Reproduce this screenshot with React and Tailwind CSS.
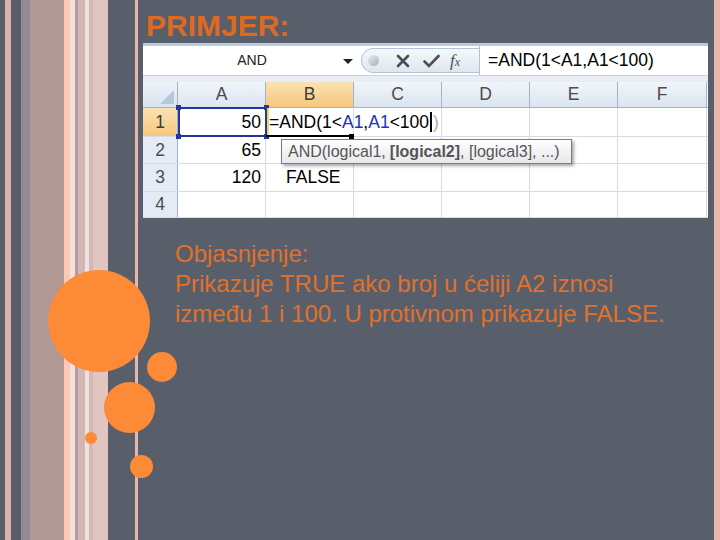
import React from 'react';

const stripes = [
  'w-[5px] bg-[#585f6b]',
  'w-[6px] bg-[#d8b1a8]',
  'w-[10px] bg-[#585f6b]',
  'w-[9px] bg-[#958a91]',
  'w-[34px] bg-[#b09894]',
  'w-[6px] bg-[#fbc9b6]',
  'w-[5px] bg-[#f3e1dc]',
  'w-[3px] bg-[#b89ba0]',
  'w-[7px] bg-[#d1b8b4]',
  'w-[4px] bg-[#f2e2df]',
  'w-[4px] bg-[#d4b8b8]',
  'w-[15px] bg-[#e0c5c1]',
  'w-[27px] bg-[#585f6b]',
  'w-[3px] bg-[#e8b6ab]',
];

const colWidths = ['w-[88px]', 'w-[88px]', 'w-[88px]', 'w-[88px]', 'w-[88px]', 'w-[89px]'];
const cols = ['A', 'B', 'C', 'D', 'E', 'F'];
const rowHeights = ['h-[29px]', 'h-[27px]', 'h-[28px]', 'h-[26px]'];

const FormulaText = () => (
  <>
    =AND(1&lt;<span className="text-[#2233b8]">A1</span>,<span className="text-[#2233b8]">A1</span>&lt;100
  </>
);

const Spreadsheet = () => {
  const cells = [
    ['50', null],
    ['65', ''],
    ['120', 'FALSE'],
    ['', ''],
  ];

  return (
    <div className="w-[565px] border-t-[3px] border-[#b7cbe3] bg-white font-['Liberation_Sans',Arial,sans-serif]">
      {/* formula bar */}
      <div className="flex h-[29px] items-center bg-white">
        <div className="relative flex h-full w-[218px] items-center justify-center text-[14px] text-[#222]">
          AND
          <span className="absolute right-[8px] top-[13px] h-0 w-0 border-x-[5px] border-t-[5px] border-x-transparent border-t-[#222]" />
        </div>
        <div className="flex h-[25px] w-[118px] items-center rounded-l-full border border-r-0 border-[#b3c3d6] bg-gradient-to-b from-[#f6f8fb] to-[#dfe6ef]">
          <span className="ml-[6px] h-[11px] w-[11px] rounded-full bg-gradient-to-br from-[#e9ecf0] to-[#a9b1bb]" />
          <svg className="ml-[17px]" width="14" height="14" viewBox="0 0 14 14">
            <path d="M2 2 L12 12 M12 2 L2 12" stroke="#4a4f57" strokeWidth="2.6" strokeLinecap="round" />
          </svg>
          <svg className="ml-[13px]" width="17" height="14" viewBox="0 0 17 14">
            <path d="M1.5 7.5 L6 12 L15.5 2" stroke="#4a4f57" strokeWidth="2.6" fill="none" strokeLinecap="round" />
          </svg>
          <span className="ml-[10px] font-['Liberation_Serif',serif] text-[17px] italic text-[#4a4f57]">
            f<span className="text-[12px]">x</span>
          </span>
        </div>
        <div className="flex h-full flex-1 items-center border-l border-[#b3c3d6] pl-[8px] text-[17.5px] text-black">
          =AND(1&lt;A1,A1&lt;100)
        </div>
      </div>
      <div className="h-[7px] border-t border-[#c8d4e2] bg-[#e9eef5]" />

      {/* grid */}
      <div className="relative">
        <div className="flex h-[26px] border-b border-[#9fb5cd]">
          <div className="relative w-[35px] border-r border-[#9fb5cd] bg-gradient-to-b from-[#eef3f9] to-[#d9e3ef]">
            <span className="absolute bottom-[3px] right-[3px] h-0 w-0 border-b-[14px] border-l-[14px] border-b-[#b6c8df] border-l-transparent" />
          </div>
          {cols.map((c, i) => (
            <div
              key={c}
              className={`${colWidths[i]} flex items-center justify-center border-r border-[#9fb5cd] text-[17.5px] ${
                c === 'B'
                  ? 'bg-gradient-to-b from-[#fbe2b4] to-[#f6c77c] text-[#3d3d3d]'
                  : 'bg-gradient-to-b from-[#f2f6fb] to-[#dbe4ef] text-[#4c4c4c]'
              }`}
            >
              {c}
            </div>
          ))}
        </div>

        {cells.map((row, r) => (
          <div key={r} className={`flex ${rowHeights[r]} border-b border-[#d5dce7]`}>
            <div
              className={`flex w-[35px] items-center justify-center border-r border-[#9fb5cd] text-[17.5px] ${
                r === 0
                  ? 'bg-gradient-to-b from-[#fbe2b4] to-[#f6c77c] text-[#3d3d3d]'
                  : 'bg-[#e4ebf5] text-[#4c4c4c]'
              }`}
            >
              {r + 1}
            </div>
            {cols.map((c, i) => (
              <div
                key={c}
                className={`${colWidths[i]} flex items-center border-r border-[#d5dce7] text-[17.5px] text-black ${
                  i === 0 ? 'justify-end pr-[4px]' : 'pl-[3px]'
                }`}
              >
                {i === 0 && row[0]}
                {i === 1 && r === 0 && (
                  <span className="flex items-center whitespace-nowrap">
                    <FormulaText />
                    <span className="mx-[1px] h-[20px] w-[2px] bg-black" />
                    <span className="text-[#b9ab96]">)</span>
                  </span>
                )}
                {i === 1 && r > 0 && <span className="pl-[17px]">{row[1]}</span>}
              </div>
            ))}
          </div>
        ))}

        {/* A1 reference highlight */}
        <div className="absolute left-[35px] top-[25px] h-[30px] w-[89px] border-2 border-[#23359e]">
          <span className="absolute -left-[4px] -top-[4px] h-[5px] w-[5px] bg-[#23359e]" />
          <span className="absolute -right-[4px] -top-[4px] h-[5px] w-[5px] bg-[#23359e]" />
          <span className="absolute -bottom-[4px] -left-[4px] h-[5px] w-[5px] bg-[#23359e]" />
          <span className="absolute -bottom-[4px] -right-[4px] h-[5px] w-[5px] bg-[#23359e]" />
        </div>
        {/* active cell B1 */}
        <div className="absolute left-[124px] top-[26px] h-[28px] w-[2px] bg-[#e8d860]" />
        <div className="absolute left-[123px] top-[53px] h-[2px] w-[86px] bg-black" />
        <div className="absolute left-[206px] top-[52px] h-[5px] w-[5px] bg-black" />

        {/* tooltip */}
        <div className="absolute left-[138px] top-[57px] flex h-[25px] w-[291px] items-center whitespace-nowrap border border-[#7b7b7b] bg-gradient-to-b from-white to-[#e7e8ec] pl-[6px] text-[16px] text-[#555] shadow-[2px_2px_3px_rgba(0,0,0,0.35)]">
          AND(logical1, <span className="ml-[4px] font-bold">[logical2]</span>, [logical3], ...)
        </div>
      </div>
    </div>
  );
};

export default function App() {
  return (
    <div className="relative flex h-[540px] w-[720px] overflow-hidden bg-[#585f6b]">
      <div className="flex h-full">
        {stripes.map((s, i) => (
          <div key={i} className={`h-full ${s}`} />
        ))}
      </div>

      <div className="flex-1 pl-[5px]">
        <h1 className="mt-[11px] pl-[3px] font-['Liberation_Sans',Arial,sans-serif] text-[30px] font-bold leading-[30px] text-[#df6a1f]">
          PRIMJER:
        </h1>
        <div className="mt-[2px]">
          <Spreadsheet />
        </div>
        <div className="mt-[21px] pl-[32px] font-['Liberation_Sans',Arial,sans-serif] text-[24px] leading-[30px] text-[#e0712a]">
          <p>Objasnjenje:</p>
          <p>Prikazuje TRUE ako broj u ćeliji A2 iznosi</p>
          <p>između 1 i 100. U protivnom prikazuje FALSE.</p>
        </div>
      </div>

      <div className="h-full w-[6px] bg-[#e8b6ab]" />

      {/* decorative circles */}
      <span className="absolute left-[48px] top-[270px] h-[102px] w-[102px] rounded-full bg-[#fd8a36]" />
      <span className="absolute left-[147px] top-[352px] h-[30px] w-[30px] rounded-full bg-[#fd8a36]" />
      <span className="absolute left-[104px] top-[382px] h-[51px] w-[51px] rounded-full bg-[#fd8a36]" />
      <span className="absolute left-[85px] top-[432px] h-[12px] w-[12px] rounded-full bg-[#fd8a36]" />
      <span className="absolute left-[130px] top-[455px] h-[23px] w-[23px] rounded-full bg-[#fd8a36]" />
    </div>
  );
}
